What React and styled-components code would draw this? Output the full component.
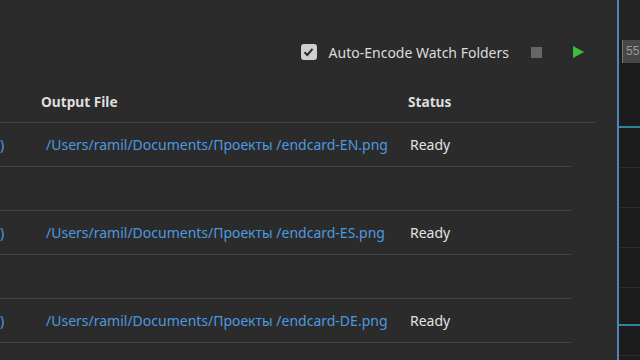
import React from "react";
import styled, { createGlobalStyle } from "styled-components";

const GlobalStyle = createGlobalStyle`
  html, body {
    margin: 0;
    padding: 0;
    background: #2a2a2a;
    overflow: hidden;
  }
  body {
    font-family: "Noto Sans", "Open Sans", sans-serif;
  }
`;

const Screen = styled.div`
  width: 640px;
  height: 360px;
  display: flex;
  overflow: hidden;
`;

const Panel = styled.div`
  width: 617px;
  flex: none;
  background: #2b2b2b;
  display: flex;
  flex-direction: column;
  overflow: hidden;
`;

const Divider = styled.div`
  width: 2px;
  flex: none;
  background: #5a80b8;
`;

const Side = styled.div`
  flex: 1;
  background: #1c1c1c;
  display: flex;
  flex-direction: column;
  overflow: hidden;
`;

const SideTop = styled.div`
  height: 40px;
  flex: none;
  background: #242424;
`;

const Ruler = styled.div`
  height: 23px;
  flex: none;
  background: #474747;
  border-left: 1px solid #777;
  margin-left: 3px;
  color: #9a9a9a;
  font-size: 12px;
  line-height: 23px;
  padding-left: 3px;
  font-family: "Liberation Sans", sans-serif;
`;

const Track = styled.div`
  height: ${(p) => p.h}px;
  flex: none;
  box-sizing: border-box;
  border-bottom: ${(p) => (p.teal ? "2px solid #2b8797" : "1px solid #2c2c2c")};
`;

const Toolbar = styled.div`
  height: 80px;
  flex: none;
  display: flex;
  align-items: center;
  justify-content: flex-end;
  padding-right: 33px;
  padding-top: 24px;
  box-sizing: border-box;
`;

const Check = styled.div`
  width: 16px;
  height: 16px;
  border-radius: 3px;
  background: #cfcfcf;
  display: flex;
  align-items: center;
  justify-content: center;
`;

const ToolLabel = styled.span`
  margin-left: 12px;
  font-size: 14px;
  color: #dcdcdc;
`;

const StopButton = styled.div`
  width: 11px;
  height: 11px;
  background: #666;
  margin-left: 22px;
`;

const PlayButton = styled.div`
  width: 0;
  height: 0;
  border-top: 6px solid transparent;
  border-bottom: 6px solid transparent;
  border-left: 11px solid #3cbd3c;
  margin-left: 31px;
`;

const Row = styled.div`
  width: ${(p) => p.w}px;
  height: ${(p) => p.h}px;
  flex: none;
  box-sizing: border-box;
  border-bottom: 1px solid #444;
  display: grid;
  grid-template-columns: ${(p) => p.cols};
  align-items: center;
  font-size: 14px;
`;

const Head = styled.span`
  font-weight: 700;
  color: #dedede;
  font-size: 13.7px;
`;

const Link = styled.span`
  color: #4b9ae0;
  white-space: nowrap;
`;

const Cell = styled.span`
  color: #e2e2e2;
`;

const files = ["EN", "ES", "DE"];

export default function App() {
  return (
    <Screen>
      <GlobalStyle />
      <Panel>
        <Toolbar>
          <Check>
            <svg width="11" height="10" viewBox="0 0 11 10">
              <path d="M1.5 5.2 L4.3 8 L9.5 1.8" stroke="#2b2b2b" strokeWidth="2" fill="none" />
            </svg>
          </Check>
          <ToolLabel>Auto-Encode Watch Folders</ToolLabel>
          <StopButton />
          <PlayButton />
        </Toolbar>
        <Row w={595} h={43} cols="41px 367px 1fr">
          <span />
          <Head>Output File</Head>
          <Head>Status</Head>
        </Row>
        {files.map((f) => (
          <React.Fragment key={f}>
            <Row w={571} h={44} cols="46px 364px 1fr">
              <Link>)</Link>
              <Link>/Users/ramil/Documents/Проекты /endcard-{f}.png</Link>
              <Cell>Ready</Cell>
            </Row>
            <Row w={571} h={44} cols="1fr" />
          </React.Fragment>
        ))}
      </Panel>
      <Divider />
      <Side>
        <SideTop />
        <Ruler>55</Ruler>
        <Track h={65} teal />
        <Track h={40} />
        <Track h={40} />
        <Track h={40} />
        <Track h={40} />
        <Track h={38} teal />
        <Track h={30} />
      </Side>
    </Screen>
  );
}
